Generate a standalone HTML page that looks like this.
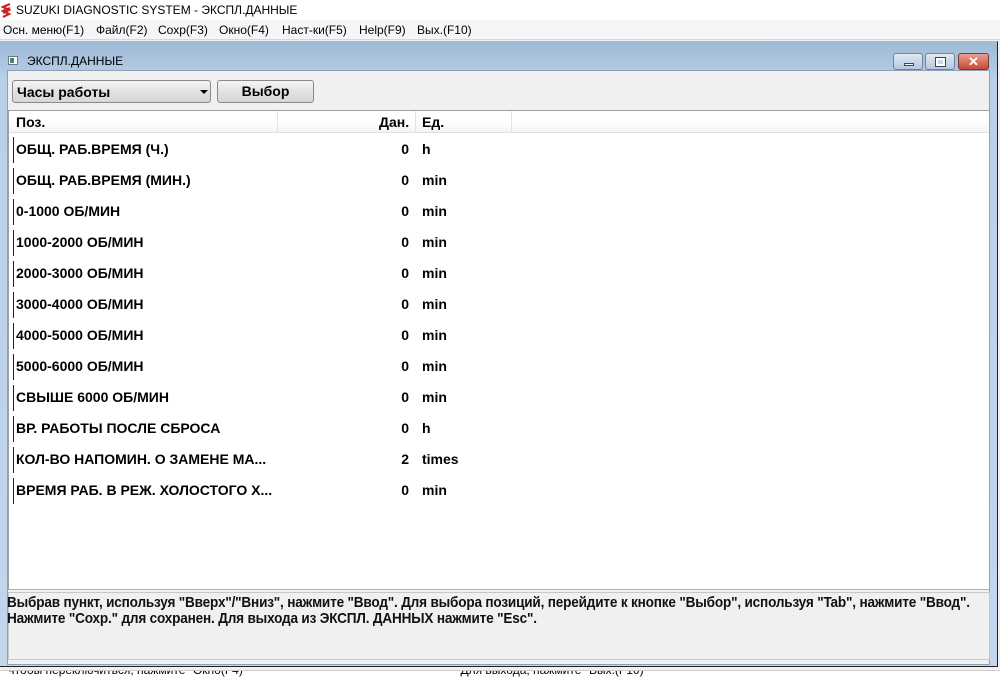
<!DOCTYPE html>
<html><head><meta charset="utf-8"><style>
*{margin:0;padding:0;box-sizing:border-box}
body{width:1000px;height:679px;overflow:hidden;background:#f0f0f0;font-family:"Liberation Sans",sans-serif;position:relative}
.abs{position:absolute}
#title{left:0;top:0;width:1000px;height:20px;background:#fff;font-size:12px;line-height:20px;padding-left:16px;color:#000}
#menu{left:0;top:20px;width:1000px;height:20px;background:#f5f6f7;font-size:12px;line-height:20px;color:#000;border-bottom:1px solid #d8d8d8}
#menu span{position:absolute;top:0}
#frame{left:0;top:41px;width:998px;height:626px;background:linear-gradient(#9fb9d6,#b9d0e8 40px,#c2d6ec);border:1px solid #7b8ea5;border-left:none;border-top-color:#a8b8c8;border-right-color:#222;border-bottom-color:#222}
#content{left:7px;top:70px;width:983px;height:595px;background:#f0f0f0;border:1px solid #8ea0b5}
.b{font-weight:bold;font-size:14px;color:#000}
#list{left:8px;top:110px;width:982px;height:480px;background:#fff;border:1px solid #a0a0a0;border-bottom:1px solid #b0b0b0}
.row{position:absolute;left:0;height:31px;width:100%}
.row .n{position:absolute;left:7px;top:7px}
.row .v{position:absolute;right:580px;top:7px;text-align:right}
.row .u{position:absolute;left:413px;top:7px}
.row .bar{position:absolute;left:4px;top:3px;width:1px;height:26px;background:#222}
.btn{border:1px solid #8a8a8a;border-radius:3px;background:linear-gradient(#f4f4f4,#e2e2e2 50%,#d6d6d6)}
</style></head><body>
<div id="title" class="abs"><svg class="abs" style="left:1px;top:3px" width="11" height="15" viewBox="0 0 11 15"><path d="M9 1L2 4L8 7L2 10M9 5L2 8L8 11L2 14" stroke="#d2221c" stroke-width="2.2" fill="none"/></svg>SUZUKI DIAGNOSTIC SYSTEM - ЭКСПЛ.ДАННЫЕ</div>
<div id="menu" class="abs">
<span style="left:3px">Осн. меню(F1)</span><span style="left:96px">Файл(F2)</span><span style="left:158px">Сохр(F3)</span><span style="left:219px">Окно(F4)</span><span style="left:282px">Наст-ки(F5)</span><span style="left:359px">Help(F9)</span><span style="left:417px">Вых.(F10)</span>
</div>
<div id="frame" class="abs"></div>
<div class="abs" style="left:8px;top:56px;width:10px;height:9px;background:#fff;border:1px solid #6a7a8a"><div style="margin:1px;width:4px;height:5px;background:#3a8a6a"></div></div>
<div class="abs" style="left:27px;top:54px;font-size:12px;color:#000">ЭКСПЛ.ДАННЫЕ</div>
<div class="abs" style="left:893px;top:53px;width:30px;height:17px;border:1px solid #6f819b;border-radius:3px;background:linear-gradient(#dfe8f3,#b6c8de)"><div style="position:absolute;left:10px;top:9px;width:10px;height:3px;background:#fff;border:1px solid #445"></div></div>
<div class="abs" style="left:925px;top:53px;width:30px;height:17px;border:1px solid #6f819b;border-radius:3px;background:linear-gradient(#dfe8f3,#b6c8de)"><div style="position:absolute;left:10px;top:4px;width:9px;height:8px;border:2px solid #fff;outline:1px solid #445"></div></div>
<div class="abs" style="left:958px;top:53px;width:31px;height:17px;border:1px solid #7a3a30;border-radius:3px;background:linear-gradient(#e8a090,#c8483a);color:#fff;font-weight:bold;font-size:13px;text-align:center;line-height:15px">✕</div>
<div id="content" class="abs"></div>
<div class="abs btn" style="left:12px;top:80px;width:199px;height:23px"><span class="b abs" style="left:4px;top:3px">Часы работы</span><div class="abs" style="left:187px;top:9px;border-left:4px solid transparent;border-right:4px solid transparent;border-top:4px solid #000"></div></div>
<div class="abs btn" style="left:217px;top:80px;width:97px;height:23px;text-align:center"><span class="b" style="line-height:21px;font-size:14px">Выбор</span></div>
<div id="list" class="abs">
<div class="abs" style="left:0;top:0;width:100%;height:22px;background:linear-gradient(#fff,#fff 50%,#f3f4f6);border-bottom:1px solid #e0e0e0"></div>
<div class="abs" style="left:268px;top:0;width:1px;height:22px;background:#e3e3e3"></div>
<div class="abs" style="left:406px;top:0;width:1px;height:22px;background:#e3e3e3"></div>
<div class="abs" style="left:502px;top:0;width:1px;height:22px;background:#e3e3e3"></div>
<span class="b abs" style="left:7px;top:3px">Поз.</span>
<span class="b abs" style="left:370px;top:3px">Дан.</span>
<span class="b abs" style="left:413px;top:3px">Ед.</span>
<div class="row" style="top:23px"><div class="bar"></div><span class="b n">ОБЩ. РАБ.ВРЕМЯ (Ч.)</span><span class="b v">0</span><span class="b u">h</span></div>
<div class="row" style="top:54px"><div class="bar"></div><span class="b n">ОБЩ. РАБ.ВРЕМЯ (МИН.)</span><span class="b v">0</span><span class="b u">min</span></div>
<div class="row" style="top:85px"><div class="bar"></div><span class="b n">0-1000 ОБ/МИН</span><span class="b v">0</span><span class="b u">min</span></div>
<div class="row" style="top:116px"><div class="bar"></div><span class="b n">1000-2000 ОБ/МИН</span><span class="b v">0</span><span class="b u">min</span></div>
<div class="row" style="top:147px"><div class="bar"></div><span class="b n">2000-3000 ОБ/МИН</span><span class="b v">0</span><span class="b u">min</span></div>
<div class="row" style="top:178px"><div class="bar"></div><span class="b n">3000-4000 ОБ/МИН</span><span class="b v">0</span><span class="b u">min</span></div>
<div class="row" style="top:209px"><div class="bar"></div><span class="b n">4000-5000 ОБ/МИН</span><span class="b v">0</span><span class="b u">min</span></div>
<div class="row" style="top:240px"><div class="bar"></div><span class="b n">5000-6000 ОБ/МИН</span><span class="b v">0</span><span class="b u">min</span></div>
<div class="row" style="top:271px"><div class="bar"></div><span class="b n">СВЫШЕ 6000 ОБ/МИН</span><span class="b v">0</span><span class="b u">min</span></div>
<div class="row" style="top:302px"><div class="bar"></div><span class="b n">ВР. РАБОТЫ ПОСЛЕ СБРОСА</span><span class="b v">0</span><span class="b u">h</span></div>
<div class="row" style="top:333px"><div class="bar"></div><span class="b n">КОЛ-ВО НАПОМИН. О ЗАМЕНЕ МА...</span><span class="b v">2</span><span class="b u">times</span></div>
<div class="row" style="top:364px"><div class="bar"></div><span class="b n">ВРЕМЯ РАБ. В РЕЖ. ХОЛОСТОГО Х...</span><span class="b v">0</span><span class="b u">min</span></div>
</div>
<div class="abs" style="left:8px;top:592px;width:982px;height:68px;background:#f0f0f0;border:1px solid #c8c8c8"></div>
<div class="abs" style="left:7px;top:595px;font-size:15px;line-height:16px;color:#111;font-weight:bold;transform:scaleX(0.905);transform-origin:0 0;white-space:nowrap;letter-spacing:-0.2px">Выбрав пункт, используя "Вверх"/"Вниз", нажмите "Ввод". Для выбора позиций, перейдите к кнопке "Выбор", используя "Tab", нажмите "Ввод".<br>Нажмите "Сохр." для сохранен. Для выхода из ЭКСПЛ. ДАННЫХ нажмите "Esc".</div>
<div class="abs" style="left:0;top:670px;width:1000px;height:9px;background:#fff;border-top:1px solid #ccc;overflow:hidden;font-size:12px;line-height:12px;color:#000;white-space:pre"><span style="position:relative;top:-7px">  Чтобы переключиться, нажмите "Окно(F4)"                                                                Для выхода, нажмите "Вых.(F10)"</span></div>
</body></html>
